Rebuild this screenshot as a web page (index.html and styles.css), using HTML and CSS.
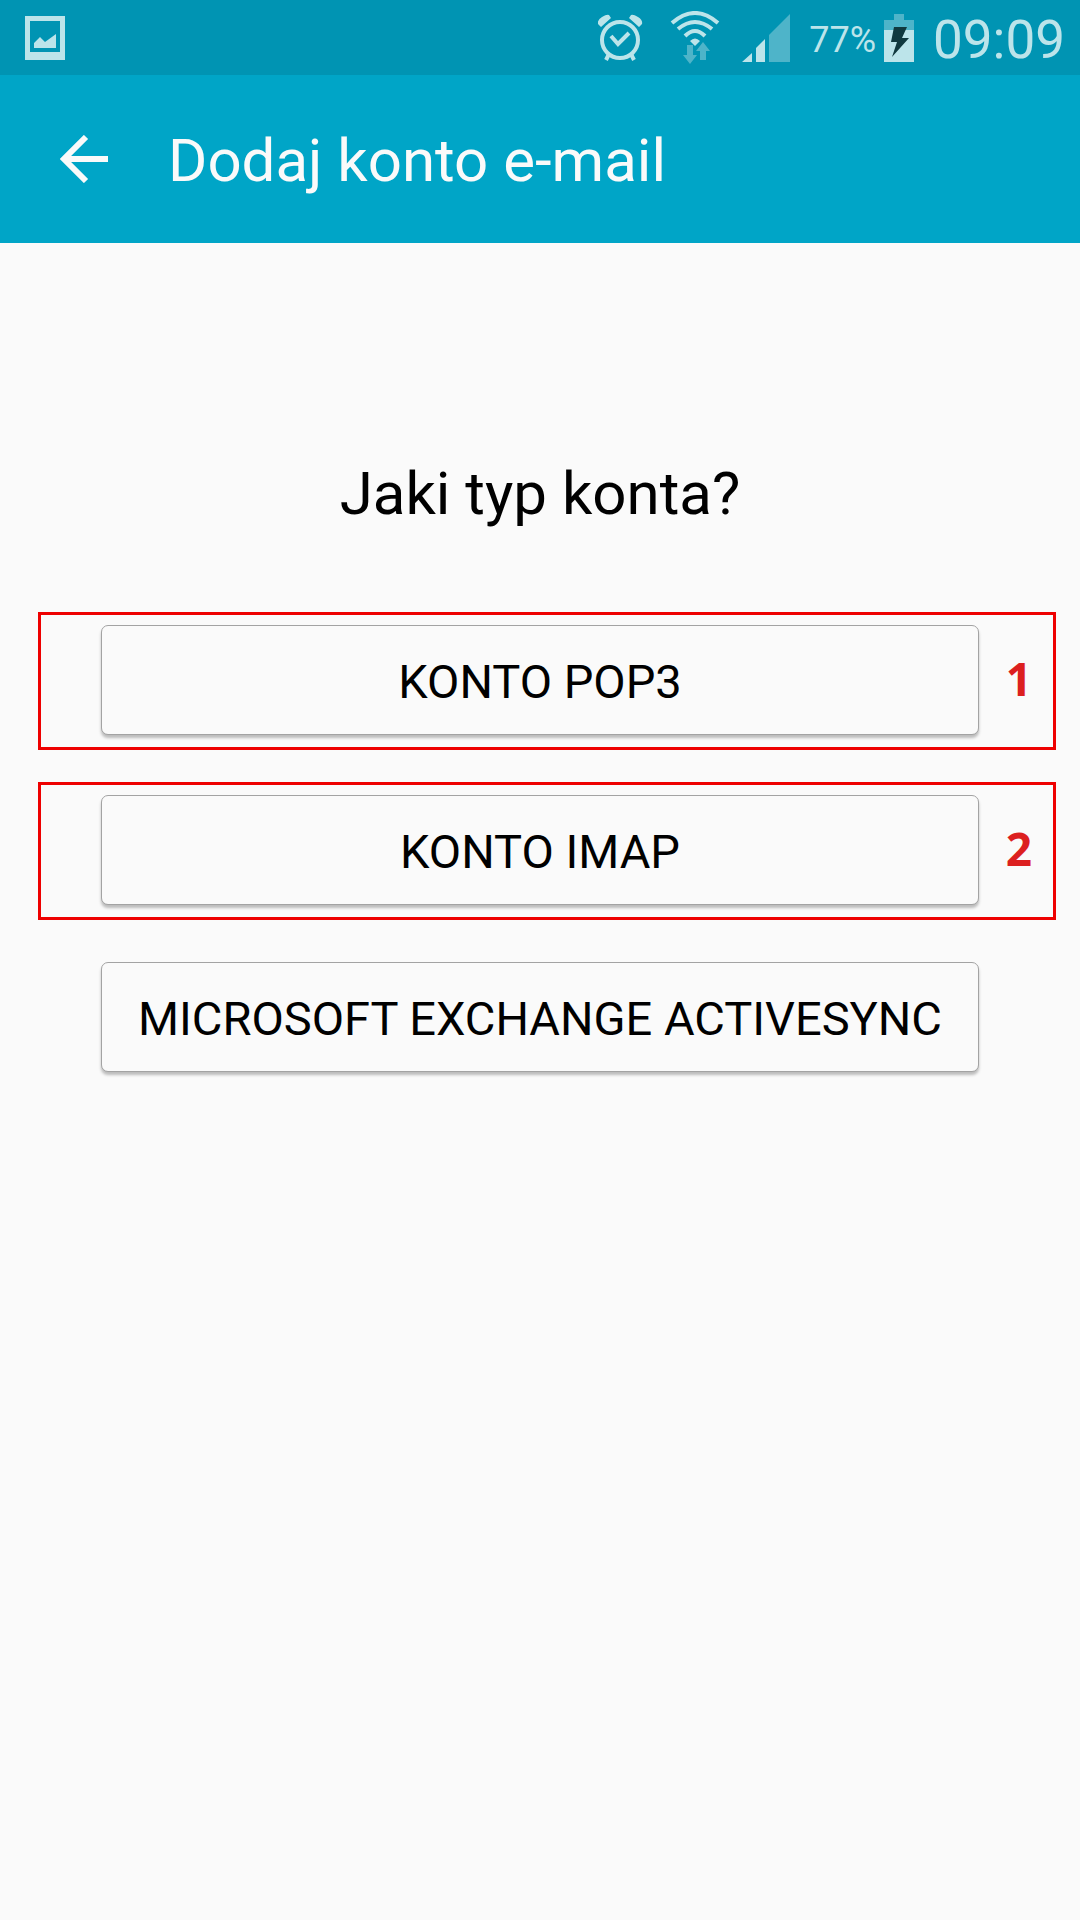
FILE: index.html
```html
<!DOCTYPE html>
<html lang="pl">
<head>
  <meta charset="UTF-8">
  <meta name="viewport" content="width=device-width, initial-scale=1.0">
  <title>Dodaj konto e-mail</title>
  <link rel="stylesheet" href="styles.css">
</head>
<body>
  <div class="status-bar">
    <svg width="40" height="44" viewBox="0 0 40 44">
      <path class="solid" fill-rule="evenodd" d="M0 0h40v44H0zM5 5v31h30V5z"/>
      <path class="solid" d="M9 32v-5l6-6 5 5 11-8v14z"/>
    </svg>

    <div class="status-icons">
      <div class="signals">
        <svg width="50" height="48" viewBox="0 0 50 48">
          <circle class="line" cx="22" cy="26" r="18" stroke-width="4"/>
          <path class="line" d="M13 22l7 8 11-11" stroke-width="4"/>
          <path class="solid" d="M3 13L0 10Q-1 6 4 3T11 1l2 3zM41 13l3-3q1-4-4-7T33 1l-2 3z"/>
          <path class="line" d="M11 40l-3 6M33 40l3 6" stroke-width="4"/>
        </svg>
        <svg width="50" height="54" viewBox="0 0 50 54">
          <path class="line" d="M2 12Q25-8 48 12M8 18Q25 4 42 18M15 25Q25 15 35 25" stroke-width="4"/>
          <path class="solid" d="M20 30q5-5 10 0l-5 5z"/>
          <path class="dim" d="M17 34h6v10h4l-7 9-7-9h4zM30 49V40h-4l7-9 7 9h-4v9z"/>
        </svg>
        <svg width="48" height="48" viewBox="0 0 48 48">
          <path class="solid" d="M0 48l10-9v9zM14 48V34l9-9v23z"/>
          <path class="dim" d="M27 48V21L48 0v48z"/>
        </svg>
      </div>
      <div class="battery">
        <span class="percent">77%</span>
        <svg width="30" height="48" viewBox="0 0 30 48">
          <path class="dim" d="M10 0h10v6h10v10H0V6h10z"/>
          <path class="solid" d="M0 16h30v32H0z"/>
          <path class="bolt" d="M10 13h13l-5 11h7L8 43l5-15H7z"/>
        </svg>
      </div>
      <span class="time">09:09</span>
    </div>
  </div>

  <header class="app-bar">
    <button class="back" type="button" aria-label="Wstecz">
      <svg width="48" height="48" viewBox="0 0 48 48">
        <path d="M48 24H5M26 2L4 24l22 22" fill="none" stroke="#fafafa" stroke-width="6"/>
      </svg>
    </button>
    <h1>Dodaj konto e-mail</h1>
  </header>

  <main>
    <h2>Jaki typ konta?</h2>
    <div class="options">
      <div class="option marked">
        <button class="account" type="button">KONTO POP3</button>
        <span class="number">1</span>
      </div>
      <div class="option marked">
        <button class="account" type="button">KONTO IMAP</button>
        <span class="number">2</span>
      </div>
      <div class="option">
        <button class="account" type="button">MICROSOFT EXCHANGE ACTIVESYNC</button>
      </div>
    </div>
  </main>
</body>
</html>
```
FILE: styles.css
```css
* {
  box-sizing: border-box;
}
body {
  margin: 0;
  min-height: 100vh;
  background-color: #fafafa;
  color: #000;
  font-family: Roboto, sans-serif;
}
svg {
  display: block;
}
h1, h2 {
  margin: 0;
  font-size: 60px;
  font-weight: 400;
  line-height: 72px;
}

/* status bar */
.status-bar {
  display: flex;
  align-items: center;
  justify-content: space-between;
  height: 75px;
  padding: 0 15px 0 25px;
  background-color: #0094b3;
  color: #bce4ea;
}
.status-icons {
  display: flex;
  align-items: center;
  gap: 19px;
}
.signals {
  display: flex;
  align-items: center;
  gap: 22px;
}
.solid {
  fill: #bce4ea;
}
.dim {
  fill: #4eb4c9;
}
.bolt {
  fill: #10393f;
}
.line {
  fill: none;
  stroke: #bce4ea;
}
.battery {
  display: flex;
  align-items: center;
  gap: 8px;
}
.percent {
  padding-top: 4px;
  font-size: 36px;
  line-height: 44px;
}
.time {
  padding-top: 4px;
  font-size: 53px;
  line-height: 64px;
}

/* app bar */
.app-bar {
  display: flex;
  align-items: center;
  gap: 60px;
  height: 168px;
  padding: 0 60px;
  background-color: #00a5c7;
  color: #fafafa;
}
.app-bar h1 {
  padding-top: 4px;
}
.back {
  padding: 0;
  border: 0;
  background: none;
  cursor: pointer;
}

/* account types */
main {
  padding-top: 215px;
}
h2 {
  text-align: center;
}
.options {
  display: flex;
  flex-direction: column;
  gap: 32px;
  padding: 82px 24px 0 38px;
}
.option {
  display: grid;
  grid-template-columns: 1fr 74px;
  align-items: center;
  padding: 10px 3px 12px 63px;
}
.marked {
  padding: 10px 0 12px 60px;
  border: 3px solid #ee0000;
}
.account {
  height: 110px;
  padding: 4px 0 0;
  border: 1px solid #a3a3a3;
  border-radius: 7px;
  background-color: #fafafa;
  box-shadow: 0 3px 3px rgba(0, 0, 0, 0.25);
  color: #000;
  font-family: inherit;
  font-size: 47px;
  line-height: 56px;
  cursor: pointer;
}
.number {
  padding: 0 0 5px 6px;
  color: #dc1f1f;
  font-family: "Open Sans", sans-serif;
  font-size: 46px;
  font-weight: 700;
  line-height: 56px;
  text-align: center;
}
```
